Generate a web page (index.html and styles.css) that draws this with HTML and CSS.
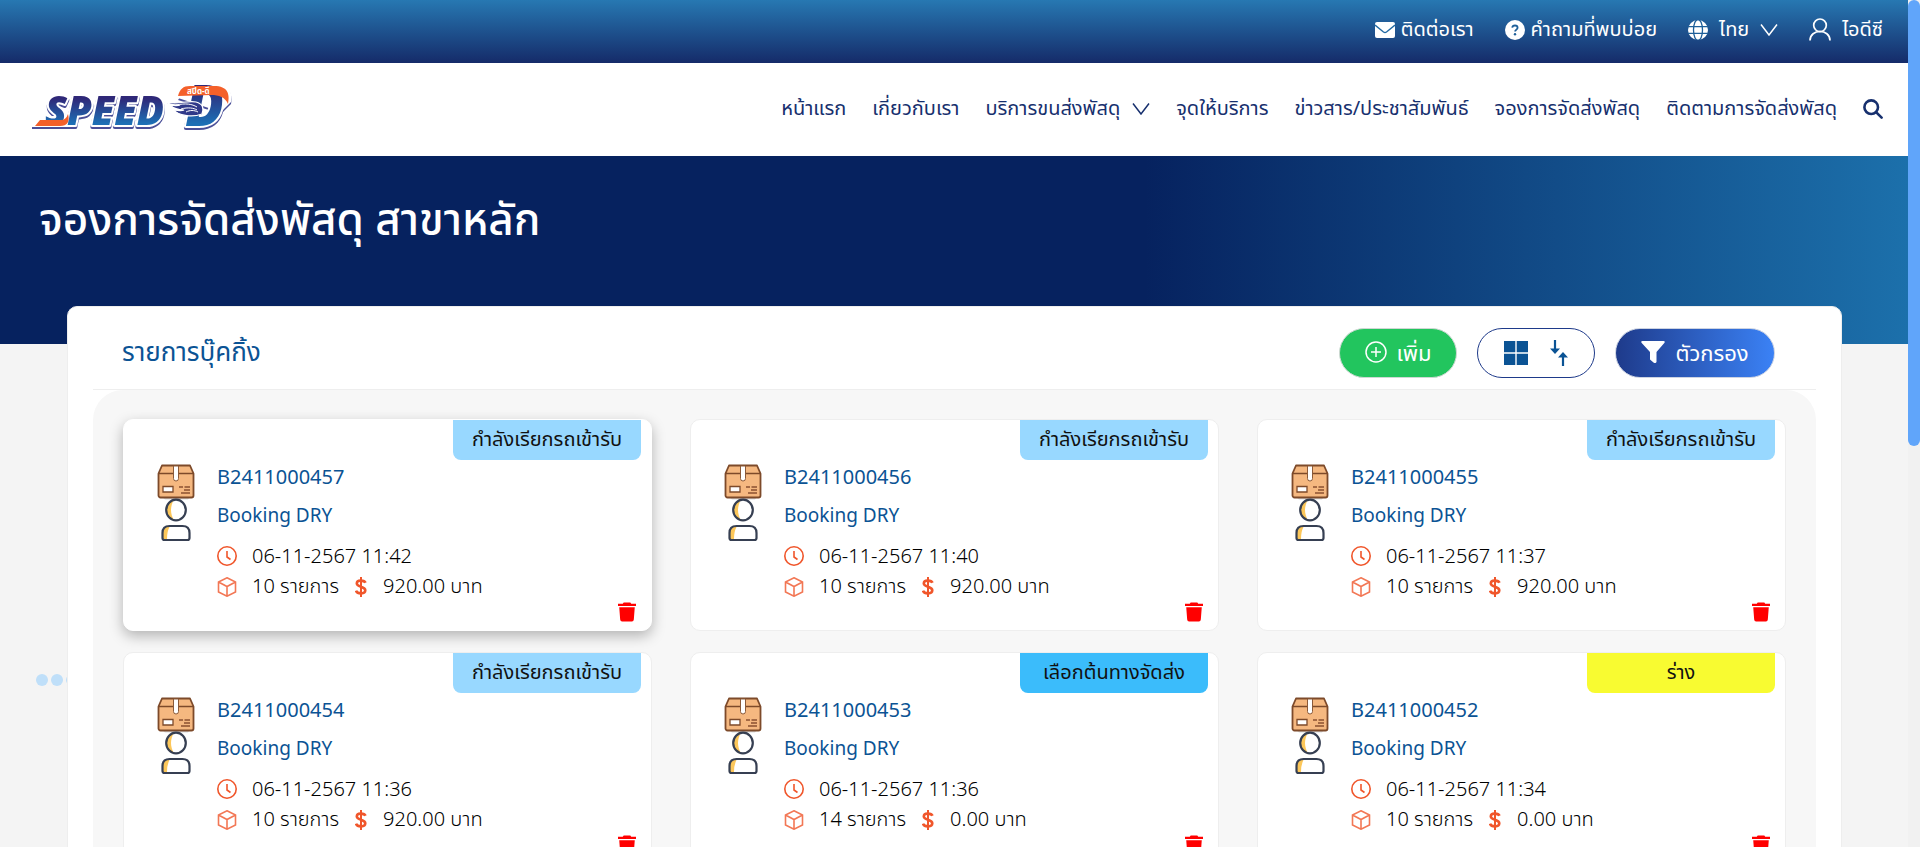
FILE: index.html
```html
<!DOCTYPE html>
<html lang="th">
<head>
<meta charset="utf-8">
<title>จองการจัดส่งพัสดุ สาขาหลัก</title>
<link rel="stylesheet" href="styles.css">
</head>
<body>
<svg class="sprite" aria-hidden="true">
  <symbol id="box" viewBox="0 0 38 36">
    <path d="M5 33h28l-2 2.500H8z" fill="#d9dde0"/>
    <path d="M5 1.500h28l3.500 8v22a2 2 0 0 1-2 2h-31a2 2 0 0 1-2-2v-22z" fill="#f5b880" stroke="#7d4a2a" stroke-width="1.800" stroke-linejoin="round"/>
    <path d="M2 9.500h34" stroke="#7d4a2a" stroke-width="1.500"/>
    <path d="M16.500 2h5v12.500a2.500 2.500 0 0 1-5 0z" fill="#fff" stroke="#8b5a38" stroke-width="1"/>
    <path d="M6 22.500h10v5.500H6z" fill="#fff" stroke="#7d4a2a" stroke-width="1.300"/>
    <path d="M22 23h4m1.500 0H33M27 26h6M24 29h9" stroke="#8b5030" stroke-width="1.300"/>
  </symbol>
  <symbol id="person" viewBox="0 0 32 44">
    <ellipse cx="16" cy="12" rx="9.800" ry="10.300" fill="#fff"/>
    <path d="M14 2C4 4 4 20 14 22 10 16 10 8 14 2z" fill="#fcc75a"/>
    <ellipse cx="16" cy="12" rx="9.800" ry="10.300" fill="none" stroke="#363f52" stroke-width="2.200"/>
    <path d="M2.500 35q0-7 7-7h13q7 0 7 7v5q0 2-2 2h-23q-2 0-2-2z" fill="#fff"/>
    <path d="M3 41v-7q0-5 7-6-3 5-3 13z" fill="#fcc75a"/>
    <path d="M2.500 35q0-7 7-7h13q7 0 7 7v5q0 2-2 2h-23q-2 0-2-2z" fill="none" stroke="#363f52" stroke-width="2.200"/>
  </symbol>
  <symbol id="clock" viewBox="0 0 20 20"><circle cx="10" cy="10" r="9.200"/><path d="M10 5v6l3.500 2.500"/></symbol>
  <symbol id="cube" viewBox="0 0 20 20"><path d="M10 .8 18.500 5v10L10 19.200 1.500 15V5zM1.500 5 10 9.500 18.500 5M10 9.500v9.700"/></symbol>
  <symbol id="dollar" viewBox="0 0 12 20"><path d="M6 0v20" stroke-width="2"/><path d="M10.500 5.800C9.500 3.300 2 2.300 1.800 6.300c-.2 4 8.700 2.700 8.500 7-.2 4.500-8.300 3.600-9.300.4" stroke-width="2.600"/></symbol>
  <symbol id="trash" viewBox="0 0 19 20"><path d="M0 1.300h5L6 0h7l1 1.300h5v2.300H0zM1.300 5h16.400l-1 13q-.2 2-2 2H4.300q-1.800 0-2-2z" fill="red"/></symbol>
  <symbol id="chev" viewBox="0 0 18 12"><path d="m1 .5 8 10.500L17 .5" fill="none" stroke="currentColor" stroke-width="1.500"/></symbol>
</svg>
<div class="frame">
<div class="page">
  <div class="topbar">
    <a href="#" class="top-link">
      <svg width="20" height="16" viewBox="0 0 20 16"><rect width="20" height="16" rx="2" fill="#fff"/><path d="m0 3 8.500 7q1.500 1 3 0L20 3" fill="none" stroke="#2169a3" stroke-width="1.400"/></svg>ติดต่อเรา</a>
    <a href="#" class="top-link">
      <svg width="20" height="20" viewBox="0 0 20 20"><circle cx="10" cy="10" r="10" fill="#fff"/><path d="M7.200 7.700Q7.500 5.500 10 5.500t2.600 2.300c0 1.700-2.500 1.900-2.500 3.800" fill="none" stroke="#1e5f99" stroke-width="1.800"/><circle cx="10" cy="14.300" r="1.200" fill="#1e5f99"/></svg>คำถามที่พบบ่อย</a>
    <button type="button" class="top-link lang">
      <svg width="20" height="20" viewBox="0 0 20 20"><circle cx="10" cy="10" r="10" fill="#fff"/><g fill="none" stroke="#1e5f99" stroke-width="1.300"><ellipse cx="10" cy="10" rx="4.500" ry="10.500"/><path d="M0 6.700h20M0 13.300h20"/></g></svg>ไทย
      <svg width="18" height="12"><use href="#chev"/></svg></button>
    <a href="#" class="top-link user">
      <svg width="22" height="23" viewBox="0 0 22 23" fill="none" stroke="#fff" stroke-width="1.700"><circle cx="11" cy="7.300" r="6.300"/><path d="M1 22.500c0-12 20-12 20 0"/></svg>ไอดีซี</a>
  </div>
  <header class="header">
    <a href="#" class="logo" aria-label="SPEED-D">
      <svg width="212" height="90" viewBox="0 -20 212 90">
        <defs>
          <linearGradient id="lg" x1="0" y1="0" x2="0" y2="1"><stop offset=".3" stop-color="#2f2878"/><stop offset=".75" stop-color="#1d6fb5"/></linearGradient>
        </defs>
        <g class="logo-outline">
          <path d="m3 40 7-7h24v7z" fill="#fff" stroke="#fff" stroke-width="4"/>
          <path d="m146 13 8-11q3-3 8-3h22q18 0 15 18l-10 10z" fill="#fff"/>
          <text x="13" y="40" class="logo-word">SPEED</text>
          <text x="153" y="41" class="logo-d">D</text>
        </g>
        <path d="m3 41 5-6h21q5 0 7-6 3 12-8 12z" fill="#f4602a"/>
        <path d="M146 11c2-7 5-10 12-10h24c14 0 16 8 14 18-3-7-9-9-17-9z" fill="#f4602a"/>
        <text x="155" y="9" class="logo-thai">สปีด-ดี</text>
        <path d="M131 16c12 5 24-1 33 1 7 2 8 6 6 12-11 4-24 1-28-4 5 1 8 1 10 0-7 0-12-3-14-5 5 1 8 1 10 0-6 0-13-1-17-4z" fill="#303989" stroke="#fff" stroke-width="1.200"/>
        <path d="M144 20c10-2 16-1 21 2M149 24c7-2 13-1 16 1M154 27c4-2 8-2 12 0" fill="none" stroke="#fff" stroke-width="1"/>
      </svg>
    </a>
    <nav class="nav">
      <a href="#">หน้าแรก</a>
      <a href="#">เกี่ยวกับเรา</a>
      <a href="#" class="has-menu">บริการขนส่งพัสดุ <svg width="18" height="12"><use href="#chev"/></svg></a>
      <a href="#">จุดให้บริการ</a>
      <a href="#">ข่าวสาร/ประชาสัมพันธ์</a>
      <a href="#">จองการจัดส่งพัสดุ</a>
      <a href="#">ติดตามการจัดส่งพัสดุ</a>
      <button type="button" class="search" aria-label="ค้นหา"><svg width="20" height="20" viewBox="0 0 20 20" fill="none" stroke="#17306e" stroke-width="2.600" stroke-linecap="round"><circle cx="8.200" cy="8.200" r="6.800"/><path d="m13.300 13.300 5.300 5.300"/></svg></button>
    </nav>
  </header>
  <section class="hero"><h1>จองการจัดส่งพัสดุ สาขาหลัก</h1></section>
  <svg class="dots" width="60" height="12" viewBox="0 0 60 12" fill="#bfdff9"><circle cx="6" cy="6" r="6"/><circle cx="21" cy="6" r="6"/><circle cx="36" cy="6" r="6"/><circle cx="51" cy="6" r="6"/></svg>
  <main class="panel">
    <div class="panel-head">
      <h2>รายการบุ๊คกิ้ง</h2>
      <div class="actions">
        <button type="button" class="btn add"><svg width="22" height="22" viewBox="0 0 22 22" fill="none" stroke="#fff" stroke-width="1.500"><circle cx="11" cy="11" r="10"/><path d="M11 6v10M6 11h10"/></svg>เพิ่ม</button>
        <div class="btn view">
          <button type="button" aria-label="ตาราง"><svg width="24" height="24" viewBox="0 0 24 24" fill="#0b5394"><path d="M0 0h11.300v11.300H0zM12.700 0H24v11.300H12.700zM0 12.700h11.300V24H0zM12.700 12.700H24V24H12.700z"/></svg></button>
          <button type="button" aria-label="เรียงลำดับ"><svg width="18" height="26" viewBox="0 0 18 26" fill="none" stroke="#0b5394" stroke-width="2.200"><path d="M5 0v11M13 26V15"/><path d="M0 8.500h10L5 14zM8 17.500h10L13 12z" fill="#0b5394" stroke="none"/></svg></button>
        </div>
        <button type="button" class="btn filter"><svg width="24" height="22" viewBox="0 0 24 22" fill="#fff"><path d="M1.500 0h21q1.800 0 1 1.800L15.500 11v10q-1 2-3 .5L9 18.500V11L.5 1.800Q-.3 0 1.500 0z"/></svg>ตัวกรอง</button>
      </div>
    </div>
    <div class="list">
      <article class="card active">
        <span class="tag">กำลังเรียกรถเข้ารับ</span>
        <div class="pics"><svg width="38" height="36"><use href="#box"/></svg><svg width="32" height="44"><use href="#person"/></svg></div>
        <div class="info"><h3>B2411000457</h3><p class="kind">Booking DRY</p>
          <p class="row"><svg class="ico"><use href="#clock"/></svg>06-11-2567 11:42</p>
          <p class="row"><svg class="ico cube"><use href="#cube"/></svg><span class="qty">10 รายการ</span><svg class="ico money"><use href="#dollar"/></svg>920.00 บาท</p></div>
        <button type="button" class="del" aria-label="ลบ"><svg width="18" height="20"><use href="#trash"/></svg></button>
      </article>
      <article class="card">
        <span class="tag">กำลังเรียกรถเข้ารับ</span>
        <div class="pics"><svg width="38" height="36"><use href="#box"/></svg><svg width="32" height="44"><use href="#person"/></svg></div>
        <div class="info"><h3>B2411000456</h3><p class="kind">Booking DRY</p>
          <p class="row"><svg class="ico"><use href="#clock"/></svg>06-11-2567 11:40</p>
          <p class="row"><svg class="ico cube"><use href="#cube"/></svg><span class="qty">10 รายการ</span><svg class="ico money"><use href="#dollar"/></svg>920.00 บาท</p></div>
        <button type="button" class="del" aria-label="ลบ"><svg width="18" height="20"><use href="#trash"/></svg></button>
      </article>
      <article class="card">
        <span class="tag">กำลังเรียกรถเข้ารับ</span>
        <div class="pics"><svg width="38" height="36"><use href="#box"/></svg><svg width="32" height="44"><use href="#person"/></svg></div>
        <div class="info"><h3>B2411000455</h3><p class="kind">Booking DRY</p>
          <p class="row"><svg class="ico"><use href="#clock"/></svg>06-11-2567 11:37</p>
          <p class="row"><svg class="ico cube"><use href="#cube"/></svg><span class="qty">10 รายการ</span><svg class="ico money"><use href="#dollar"/></svg>920.00 บาท</p></div>
        <button type="button" class="del" aria-label="ลบ"><svg width="18" height="20"><use href="#trash"/></svg></button>
      </article>
      <article class="card">
        <span class="tag">กำลังเรียกรถเข้ารับ</span>
        <div class="pics"><svg width="38" height="36"><use href="#box"/></svg><svg width="32" height="44"><use href="#person"/></svg></div>
        <div class="info"><h3>B2411000454</h3><p class="kind">Booking DRY</p>
          <p class="row"><svg class="ico"><use href="#clock"/></svg>06-11-2567 11:36</p>
          <p class="row"><svg class="ico cube"><use href="#cube"/></svg><span class="qty">10 รายการ</span><svg class="ico money"><use href="#dollar"/></svg>920.00 บาท</p></div>
        <button type="button" class="del" aria-label="ลบ"><svg width="18" height="20"><use href="#trash"/></svg></button>
      </article>
      <article class="card">
        <span class="tag origin">เลือกต้นทางจัดส่ง</span>
        <div class="pics"><svg width="38" height="36"><use href="#box"/></svg><svg width="32" height="44"><use href="#person"/></svg></div>
        <div class="info"><h3>B2411000453</h3><p class="kind">Booking DRY</p>
          <p class="row"><svg class="ico"><use href="#clock"/></svg>06-11-2567 11:36</p>
          <p class="row"><svg class="ico cube"><use href="#cube"/></svg><span class="qty">14 รายการ</span><svg class="ico money"><use href="#dollar"/></svg>0.00 บาท</p></div>
        <button type="button" class="del" aria-label="ลบ"><svg width="18" height="20"><use href="#trash"/></svg></button>
      </article>
      <article class="card">
        <span class="tag draft">ร่าง</span>
        <div class="pics"><svg width="38" height="36"><use href="#box"/></svg><svg width="32" height="44"><use href="#person"/></svg></div>
        <div class="info"><h3>B2411000452</h3><p class="kind">Booking DRY</p>
          <p class="row"><svg class="ico"><use href="#clock"/></svg>06-11-2567 11:34</p>
          <p class="row"><svg class="ico cube"><use href="#cube"/></svg><span class="qty">10 รายการ</span><svg class="ico money"><use href="#dollar"/></svg>0.00 บาท</p></div>
        <button type="button" class="del" aria-label="ลบ"><svg width="18" height="20"><use href="#trash"/></svg></button>
      </article>
    </div>
  </main>
</div>
<div class="scroll" aria-hidden="true"><div class="thumb"></div></div>
</div>
</body>
</html>
```
FILE: styles.css
```css
* { box-sizing: border-box; margin: 0; padding: 0; }
body, button { font-family: "Noto Sans", "Noto Sans Thai", sans-serif; }
body { font-size: 20px; color: #111; background: #f4f4f4; }
a { color: inherit; text-decoration: none; }
button { border: 0; background: none; color: inherit; font-size: inherit; cursor: pointer; }
svg { display: block; flex: none; }
.sprite { position: absolute; width: 0; height: 0; }

.frame { display: grid; grid-template-columns: 1fr 12px; height: 100vh; overflow: hidden; }
.page { position: relative; overflow: hidden; }
.scroll { background: #f1f1f1; }
.thumb { height: 446px; border-radius: 6px; background: #60a5fa; }

.topbar { display: flex; justify-content: flex-end; align-items: center; gap: 31px; height: 63px; padding: 0 25px 4px 0; color: #fff; background: linear-gradient(#2778b2, #152b69); }
.top-link { display: flex; align-items: center; gap: 6px; font-size: 20px; }
.lang { gap: 11px; }
.user { gap: 11px; }

.header { display: flex; justify-content: space-between; align-items: center; height: 93px; padding: 0 25px 0 32px; background: #fff; color: #17306e; }
.logo-word, .logo-d { font: italic 800 40px "Open Sans", sans-serif; fill: url(#lg); stroke: #fff; stroke-width: 4px; stroke-linejoin: round; paint-order: stroke; }
.logo-d { font-size: 57px; }
.logo-outline { filter: drop-shadow(0 2px 0 #4a4f98); }
.logo-thai { font: 700 8px "Noto Sans", "Noto Sans Thai", sans-serif; fill: #fff; }
.nav { display: flex; align-items: center; gap: 26px; padding-bottom: 2px; font-size: 20px; white-space: nowrap; }
.has-menu { display: flex; align-items: center; gap: 12px; }

.hero { height: 188px; padding: 30px 39px; color: #fff; background: linear-gradient(90deg, #06225f 60%, #1c70ab); }
.hero h1 { font-size: 44px; font-weight: 500; line-height: 64px; }
.dots { position: absolute; left: 36px; top: 674px; }

.panel { position: relative; margin: -38px 66px 0 67px; padding: 0 25px; background: #fff; border: 1px solid #eee; border-radius: 10px; }
.panel-head { display: flex; justify-content: space-between; align-items: center; height: 83px; padding: 10px 41px 0 29px; border-bottom: 1px solid #eee; }
.panel-head h2 { padding-bottom: 4px; font-size: 26px; font-weight: 400; line-height: 40px; color: #0b5394; }
.actions { display: flex; gap: 20px; }
.btn { display: flex; align-items: center; justify-content: center; gap: 10px; height: 50px; padding-bottom: 3px; border-radius: 25px; color: #fff; font-size: 22px; line-height: 40px; }
.add { width: 118px; background: #22c55e; border: 1px solid #cfd8d3; }
.view { width: 118px; gap: 22px; padding-bottom: 0; border: 1px solid #1e3a8a; background: #fff; }
.filter { width: 160px; border: 1px solid #ccd3e2; background: linear-gradient(90deg, #1e3a8a, #3b82f6) border-box; }

.list { display: grid; grid-template-columns: repeat(3, 1fr); gap: 21px 38px; padding: 29px 30px 30px; border-radius: 30px 30px 0 0; background: #f7f7f7; }
.card { display: grid; grid-template-columns: 60px 1fr; padding: 0 10px 8px 33px; border: 1px solid #eee; border-radius: 10px; background: #fff; }
.card.active { border-color: #fff; box-shadow: 0 5px 14px rgba(0, 0, 0, .28); }
.tag { grid-column: 1 / -1; justify-self: end; width: 188px; line-height: 38px; padding-bottom: 2px; border-radius: 0 0 8px 8px; text-align: center; font-size: 20px; background: #98d8ff; white-space: nowrap; }
.tag.origin { background: #3bbcfb; }
.tag.draft { background: #f8fb31; }
.pics { display: flex; flex-direction: column; align-items: center; width: 38px; padding-top: 4px; }
.pics svg + svg { margin-top: -2px; }
.info h3, .kind { font-size: 20px; font-weight: 400; line-height: 34px; color: #0b5394; }
.kind { margin: 4px 0 8px; font-size: 19px; }
.row { display: flex; align-items: center; height: 31px; font-size: 20px; font-weight: 300; color: #000; }
.ico { width: 20px; height: 20px; margin-right: 15px; fill: none; stroke: #f0562b; stroke-width: 1.6px; }
.cube { opacity: .8; }
.money { width: 12px; height: 20px; margin: 0 16px; }
.del { grid-column: 1 / -1; justify-self: end; height: 20px; margin-right: 5px; }
```
